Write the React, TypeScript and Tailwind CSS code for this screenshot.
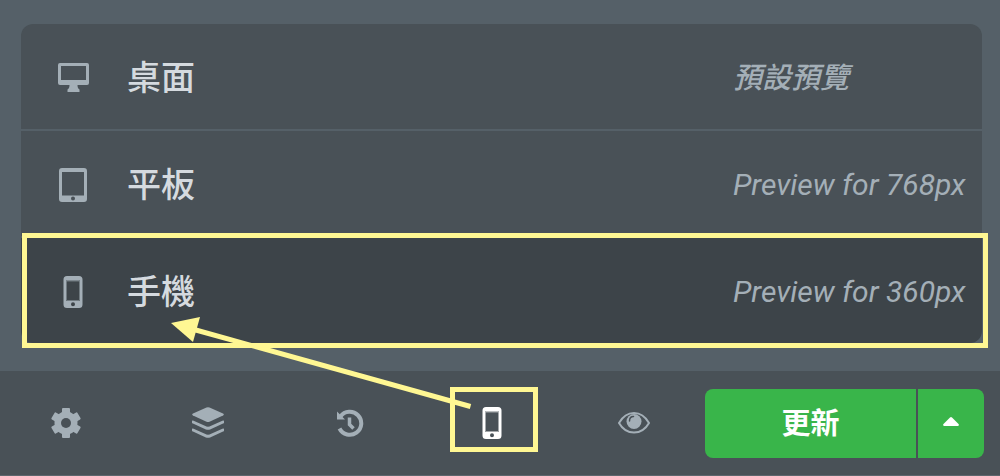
import { useState } from "react";
import type { ReactNode } from "react";

interface Device {
  id: string;
  label: string;
  hint: string;
  hintStyle: string;
  icon: ReactNode;
}

function DesktopIcon() {
  return (
    <svg width="32" height="30" viewBox="0 0 32 30" fill="currentColor" aria-hidden="true">
      <path
        fillRule="evenodd"
        d="M3 0h27a2 2 0 0 1 2 2v18a2 2 0 0 1-2 2H20.500c0 2 .5 3.500 2 4.500V29h-12v-2.500c1.500-1 2-2.500 2-4.500H3a2 2 0 0 1-2-2V2a2 2 0 0 1 2-2zm1 3v14h25V3z"
      />
    </svg>
  );
}

function TabletIcon() {
  return (
    <svg width="28" height="34" viewBox="0 0 28 34" fill="currentColor" aria-hidden="true">
      <path
        fillRule="evenodd"
        d="M3 0h22a3 3 0 0 1 3 3v28a3 3 0 0 1-3 3H3a3 3 0 0 1-3-3V3a3 3 0 0 1 3-3zm0 4v23.500h22V4zm11 24.500a2 2 0 1 0 0 4 2 2 0 0 0 0-4z"
      />
    </svg>
  );
}

function PhoneIcon() {
  return (
    <svg width="20" height="32" viewBox="0 0 20 32" fill="currentColor" aria-hidden="true">
      <path
        fillRule="evenodd"
        d="M4 0h12a3.500 3.500 0 0 1 3.500 3.500v25A3.500 3.500 0 0 1 16 32H4a3.500 3.500 0 0 1-3.500-3.500v-25A3.500 3.500 0 0 1 4 0zM3 4.500V25h14V4.500zM10 26.300a2 2 0 1 0 0 4 2 2 0 0 0 0-4z"
      />
      <path d="M3.500 5h13v19.500h-13z" fill="none" stroke="currentColor" strokeOpacity="0.5" />
    </svg>
  );
}

function GearIcon() {
  return (
    <svg width="30" height="30" viewBox="0 0 30 30" fill="currentColor" aria-hidden="true">
      <circle cx="15" cy="15" r="11.500" />
      <rect x="11" y="0" width="8" height="30" rx="1" />
      <rect x="11" y="0" width="8" height="30" rx="1" transform="rotate(60 15 15)" />
      <rect x="11" y="0" width="8" height="30" rx="1" transform="rotate(120 15 15)" />
      <circle cx="15" cy="15" r="5" className="fill-[#495157]" />
    </svg>
  );
}

function LayersIcon() {
  return (
    <svg width="32" height="32" viewBox="0 0 32 32" fill="currentColor" aria-hidden="true">
      <path d="M14.500.5q1.500-.6 3 0L31 6.500q1.600 1 0 2L17.500 14.700q-1.500.6-3 0L1 8.500q-1.600-1 0-2z" />
      <path d="M1 15l13.500 6q1.500.6 3 0L31 15" fill="none" stroke="currentColor" strokeWidth="3" strokeLinecap="round" />
      <path d="M1 23l13.500 6q1.500.6 3 0L31 23" fill="none" stroke="currentColor" strokeWidth="3" strokeLinecap="round" />
    </svg>
  );
}

function HistoryIcon() {
  return (
    <svg width="28" height="28" viewBox="0 0 28 28" fill="none" stroke="currentColor" aria-hidden="true">
      <path d="M4.500 7.500A11.500 11.500 0 1 1 3.500 19.500" strokeWidth="4" />
      <path d="M1 2.500v8h8z" fill="currentColor" stroke="none" />
      <path d="M13.500 8.500v7l4 4" strokeWidth="3.500" />
    </svg>
  );
}

function EyeIcon() {
  return (
    <svg width="32" height="22" viewBox="0 0 32 22" fill="none" stroke="currentColor" aria-hidden="true">
      <path d="M1 11C5 4 10 1 16 1s11 3 15 10c-4 7-9 9.500-15 9.500S5 18 1 11z" strokeWidth="2" />
      <circle cx="16" cy="9.500" r="7.500" fill="currentColor" stroke="none" />
      <path
        d="M11.500 9c0-2.500 1.500-4.500 4-4.500"
        className="stroke-[#495157]"
        strokeWidth="1.500"
        strokeLinecap="round"
      />
    </svg>
  );
}

const devices: Device[] = [
  { id: "desktop", label: "桌面", hint: "預設預覽", hintStyle: "text-[29px] font-medium", icon: <DesktopIcon /> },
  { id: "tablet", label: "平板", hint: "Preview for 768px", hintStyle: "text-[30px]", icon: <TabletIcon /> },
  { id: "mobile", label: "手機", hint: "Preview for 360px", hintStyle: "text-[30px]", icon: <PhoneIcon /> },
];

const tool = "relative flex h-16 w-8 items-center justify-center text-[#a4afb7]";

export default function App() {
  const [active, setActive] = useState("mobile");

  return (
    <div className="relative flex min-h-screen flex-col bg-[#556068] font-['Roboto','Noto_Sans_CJK_TC',sans-serif]">
      <ul className="mt-6 mr-[18px] mb-7 ml-[21px] flex flex-col gap-0.5">
        {devices.map((device) => (
          <li key={device.id} className="group relative">
            <button
              type="button"
              onClick={() => setActive(device.id)}
              className={`flex h-[105px] w-full items-center pt-0.5 text-left group-first:rounded-t-xl group-last:rounded-b-xl ${
                active === device.id ? "bg-[#3d4449]" : "bg-[#495157]"
              }`}
            >
              <span className="mr-0.5 flex w-[104px] justify-center text-[#a4afb7]">{device.icon}</span>
              <span className="flex-1 text-[34px] leading-10 font-medium text-[#d5dadf]">{device.label}</span>
              <span className={`w-[249px] leading-10 whitespace-nowrap text-[#a4afb7] italic ${device.hintStyle}`}>
                {device.hint}
              </span>
            </button>
            {device.id === "mobile" && (
              <span className="pointer-events-none absolute -top-[5px] -right-1.5 -bottom-[5px] left-px border-[5px] border-[#fff793]" />
            )}
          </li>
        ))}
      </ul>

      <footer className="flex flex-1 items-center border-b border-[#5d666d] bg-[#495157] pr-4">
        <nav className="flex flex-1 items-center justify-between pr-[55px] pl-[50px]">
          <button type="button" aria-label="Settings" className={tool}>
            <GearIcon />
          </button>
          <button type="button" aria-label="Navigator" className={tool}>
            <LayersIcon />
          </button>
          <button type="button" aria-label="History" className={tool}>
            <HistoryIcon />
          </button>
          <button
            type="button"
            aria-label="Responsive mode"
            className="relative flex h-16 w-8 items-center justify-center text-white"
          >
            <PhoneIcon />
            <span className="pointer-events-none absolute -top-1 -right-[30px] bottom-[3px] -left-[26px] border-[5px] border-[#fff793]" />
          </button>
          <button type="button" aria-label="Preview changes" className={tool}>
            <EyeIcon />
          </button>
        </nav>
        <div className="flex gap-0.5 text-white">
          <button type="button" className="h-[69px] w-[211px] rounded-l-lg bg-[#39b54a] pt-1 text-[29px] font-bold">
            更新
          </button>
          <button
            type="button"
            aria-label="Save options"
            className="flex h-[69px] w-[66px] items-center justify-center rounded-r-lg bg-[#39b54a] pb-1"
          >
            <svg width="16" height="9" viewBox="0 0 16 9" fill="currentColor" aria-hidden="true">
              <path d="M7 .5q1-1 2 0l6.500 6.500q1 1.500-.5 2H1q-1.500-.5-.5-2z" />
            </svg>
          </button>
        </div>
      </footer>

      {/* pointer from the toolbar button to the mobile row */}
      <svg
        width="302"
        height="92"
        viewBox="0 0 302 92"
        className="pointer-events-none absolute top-[317px] left-[170px]"
        aria-hidden="true"
      >
        <path d="M24 12.500L300.500 89.500" className="stroke-[#fff793]" strokeWidth="5" />
        <path d="M1 6L30 0l-7 25z" className="fill-[#fff793]" />
      </svg>
    </div>
  );
}
